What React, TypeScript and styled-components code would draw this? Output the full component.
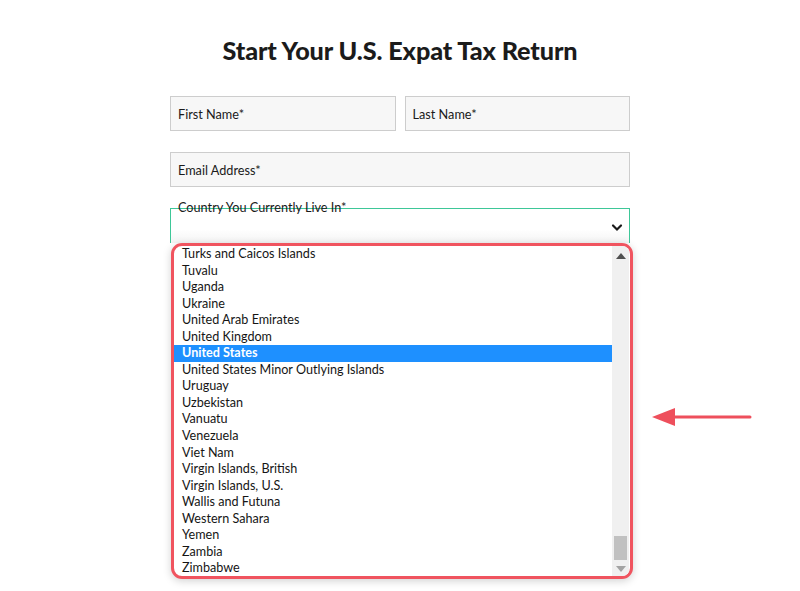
import styled, { createGlobalStyle } from 'styled-components'

const GlobalStyle = createGlobalStyle`
  html, body {
    margin: 0;
    padding: 0;
    background: #fff;
  }
  body {
    font-family: Lato, "Open Sans", sans-serif;
    color: #1f1f1f;
  }
`

const countries = [
  'Turks and Caicos Islands',
  'Tuvalu',
  'Uganda',
  'Ukraine',
  'United Arab Emirates',
  'United Kingdom',
  'United States',
  'United States Minor Outlying Islands',
  'Uruguay',
  'Uzbekistan',
  'Vanuatu',
  'Venezuela',
  'Viet Nam',
  'Virgin Islands, British',
  'Virgin Islands, U.S.',
  'Wallis and Futuna',
  'Western Sahara',
  'Yemen',
  'Zambia',
  'Zimbabwe'
]

const Page = styled.div`
  position: relative;
  width: 800px;
  height: 591px;
  overflow: hidden;
  padding-top: 36px;
  box-sizing: border-box;
`

const Title = styled.h1`
  margin: 0 0 32px 0;
  text-align: center;
  font-family: Lato, sans-serif;
  font-size: 25.2px;
  font-weight: 900;
  letter-spacing: -0.1px;
  line-height: 28px;
  color: #1b1b1b;
`

const Form = styled.form`
  width: 460px;
  margin: 0 auto;
  display: flex;
  flex-direction: column;
  gap: 21px;
`

const Row = styled.div`
  display: flex;
  gap: 9px;
`

const Field = styled.div`
  flex: 1;
  height: 35px;
  box-sizing: border-box;
  border: 1px solid #cdcdcd;
  background: #f7f7f7;
  display: flex;
  align-items: center;
  padding: 0 7px;
  font-size: 12.7px;
  color: #1a1a1a;
`

const SelectWrap = styled.div`
  position: relative;
  height: 35px;
`

const SelectBox = styled.div`
  height: 35px;
  box-sizing: border-box;
  border: 1px solid #3ec798;
  border-bottom: none;
  background: linear-gradient(#fff 60%, #f4f4f4);
  display: flex;
  align-items: center;
  justify-content: flex-end;
  padding: 2px 6px 0 0;
`

const FloatLabel = styled.span`
  position: absolute;
  left: 8px;
  top: -9px;
  font-size: 12.7px;
  color: #1a1a1a;
  line-height: 16px;
`

const Dropdown = styled.div`
  position: absolute;
  left: 1px;
  top: 35px;
  width: 462px;
  height: 336px;
  box-sizing: border-box;
  border: 3px solid #f0545f;
  border-radius: 11px;
  background: #fff;
  box-shadow: 0 2px 8px rgba(0, 0, 0, 0.18);
  display: flex;
  overflow: hidden;
`

const OptionList = styled.ul`
  flex: 1;
  list-style: none;
  margin: 0;
  padding: 0;
`

const Option = styled.li<{ $selected?: boolean }>`
  height: 16.55px;
  line-height: 16.55px;
  padding-left: 8px;
  font-size: 12.6px;
  white-space: nowrap;
  color: ${({ $selected }) => ($selected ? '#fff' : '#151515')};
  background: ${({ $selected }) => ($selected ? '#1e90ff' : 'transparent')};
  font-weight: ${({ $selected }) => ($selected ? 700 : 400)};
`

const ScrollTrack = styled.div`
  width: 17px;
  margin-right: 1px;
  background: #f0f0f0;
  display: flex;
  flex-direction: column;
  align-items: center;
  justify-content: space-between;
  padding: 7px 0 4px;
`

const Thumb = styled.div`
  width: 13px;
  height: 24px;
  background: #c1c1c1;
  margin-top: auto;
  margin-bottom: 6px;
`

const ArrowGlyph = styled.svg`
  display: block;
`

const Annotation = styled.svg`
  position: absolute;
  left: 650px;
  top: 405px;
`

const Chevron = () => (
  <svg width="12" height="9" viewBox="0 0 12 9">
    <path d="M2 2.5 L6 6.5 L10 2.5" fill="none" stroke="#1a1a1a" strokeWidth="2.2" strokeLinecap="round" />
  </svg>
)

export default function App() {
  return (
    <Page>
      <GlobalStyle />
      <Title>Start Your U.S. Expat Tax Return</Title>
      <Form>
        <Row>
          <Field>First Name*</Field>
          <Field>Last Name*</Field>
        </Row>
        <Row>
          <Field>Email Address*</Field>
        </Row>
        <SelectWrap>
          <SelectBox>
            <Chevron />
          </SelectBox>
          <FloatLabel>Country You Currently Live In*</FloatLabel>
          <Dropdown>
            <OptionList>
              {countries.map(c => (
                <Option key={c} $selected={c === 'United States'}>
                  {c}
                </Option>
              ))}
            </OptionList>
            <ScrollTrack>
              <ArrowGlyph width="10" height="6" viewBox="0 0 10 6">
                <path d="M0 6 L5 0 L10 6 Z" fill="#505050" />
              </ArrowGlyph>
              <Thumb />
              <ArrowGlyph width="10" height="6" viewBox="0 0 10 6">
                <path d="M0 0 L5 6 L10 0 Z" fill="#a3a3a3" />
              </ArrowGlyph>
            </ScrollTrack>
          </Dropdown>
        </SelectWrap>
      </Form>
      <Annotation width="104" height="24" viewBox="0 0 104 24">
        <path d="M24 12 L100 12" stroke="#ee4f5c" strokeWidth="3" strokeLinecap="round" />
        <path d="M2 12 L25 3 L25 21 Z" fill="#ee4f5c" />
      </Annotation>
    </Page>
  )
}
